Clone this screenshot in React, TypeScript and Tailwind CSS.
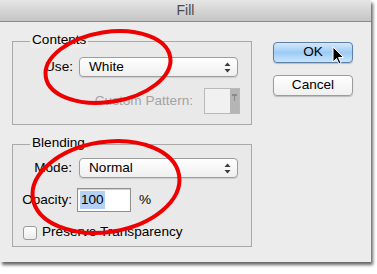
import React from "react";

const font = { fontFamily: '"Liberation Sans", Arial, sans-serif' };

function SelectBox({ value, width }: { value: string; width: number }) {
  return (
    <div
      className="relative flex h-[20px] items-center rounded-[4px] border border-[#9d9d9d] bg-gradient-to-b from-[#ffffff] to-[#efefef] pl-[9px] text-[13.6px] text-black shadow-[0_1px_1px_rgba(0,0,0,0.12)]"
      style={{ width }}
    >
      {value}
      <svg className="absolute right-[6px] top-[4px]" width="7" height="11" viewBox="0 0 7 11">
        <path d="M3.5 0.5 L6.5 4 L0.5 4 Z" fill="#3a3a3a" />
        <path d="M3.5 10.5 L6.5 7 L0.5 7 Z" fill="#3a3a3a" />
      </svg>
    </div>
  );
}

export default function App() {
  return (
    <div className="relative h-[274px] w-[377px] overflow-hidden bg-white" style={font}>
      <div className="flex h-[262px] w-[371px] flex-col bg-[#ececec] shadow-[2px_3px_3px_rgba(0,0,0,0.6)]">
        {/* title bar */}
        <div className="flex h-[22px] shrink-0 items-center justify-center border-b border-[#8a8a8a] bg-gradient-to-b from-[#e6e6e6] to-[#c4c4c4] text-[14px] text-[#4a4a4a]">
          Fill
        </div>
        <div className="flex flex-1">
          {/* left column */}
          <div className="flex w-[273px] flex-col pl-[12px] pt-[19px]">
            {/* Contents */}
            <div className="relative h-[84px] w-[240px] border border-[#a9a9a9] bg-[#e9e9e9]">
              <span className="absolute left-[17px] top-[-10px] bg-[#ececec] px-[2px] text-[13.6px] leading-[16px] text-black">
                Contents
              </span>
              <div className="mt-[15px] flex items-center">
                <span className="w-[60px] text-right text-[13.6px] text-black">Use:</span>
                <div className="ml-[6px]">
                  <SelectBox value="White" width={159} />
                </div>
              </div>
              <div className="mt-[11px] flex items-center justify-end pr-[11px]">
                <span className="mr-[11px] text-[13.6px] text-[#a3a3a3]">Custom Pattern:</span>
                <div className="flex h-[26px] w-[36px] border border-[#b9b9b9] bg-[#f1f1f1]">
                  <div className="flex-1" />
                  <div className="flex w-[9px] items-start justify-center bg-[#b5b5b5] pt-[5px]">
                    <svg width="5" height="9" viewBox="0 0 5 9">
                      <path d="M0 0 H5 V2 H3 V7 H2 V2 H0 Z" fill="#8a8a8a" />
                    </svg>
                  </div>
                </div>
              </div>
            </div>
            {/* Blending */}
            <div className="relative mt-[19px] h-[103px] w-[240px] border border-[#a9a9a9] bg-[#e9e9e9]">
              <span className="absolute left-[17px] top-[-10px] bg-[#ececec] px-[2px] text-[13.6px] leading-[16px] text-black">
                Blending
              </span>
              <div className="mt-[13px] flex items-center">
                <span className="w-[59px] text-right text-[13.6px] text-black">Mode:</span>
                <div className="ml-[7px]">
                  <SelectBox value="Normal" width={159} />
                </div>
              </div>
              <div className="mt-[10px] flex items-center">
                <span className="w-[59px] text-right text-[13.6px] text-black">Opacity:</span>
                <div className="ml-[5px] flex h-[24px] w-[54px] items-center border border-[#8f8f8f] bg-white pl-[2px] shadow-[inset_0_1px_1px_rgba(0,0,0,0.2)]">
                  <span className="bg-[#b4d1f3] px-[1px] text-[13.6px] leading-[18px] text-black">100</span>
                </div>
                <span className="ml-[8px] text-[13.6px] text-black">%</span>
              </div>
              <div className="mt-[10px] flex items-center pl-[10px]">
                <div className="h-[14px] w-[14px] rounded-[3px] border border-[#9a9a9a] bg-gradient-to-b from-[#ffffff] to-[#ececec]" />
                <span className="ml-[5px] text-[13.6px] text-black">Preserve Transparency</span>
              </div>
            </div>
          </div>
          {/* right column */}
          <div className="flex flex-col pt-[20px]">
            <button className="flex h-[21px] w-[80px] items-center justify-center rounded-[4px] border border-[#5c7fa8] bg-gradient-to-b from-[#d5e8fb] via-[#9ccbf5] to-[#c9e5fd] text-[13.6px] text-black shadow-[0_1px_1px_rgba(0,0,0,0.2)]">
              OK
            </button>
            <button className="mt-[12px] flex h-[21px] w-[80px] items-center justify-center rounded-[4px] border border-[#9c9c9c] bg-gradient-to-b from-[#ffffff] to-[#f0f0f0] text-[13.6px] text-black shadow-[0_1px_1px_rgba(0,0,0,0.2)]">
              Cancel
            </button>
          </div>
        </div>
      </div>
      {/* annotations */}
      <svg className="pointer-events-none absolute left-0 top-0" width="377" height="274" viewBox="0 0 377 274">
        <ellipse cx="108" cy="67" rx="63" ry="35" transform="rotate(-9 108 67)" fill="none" stroke="#ee0000" strokeWidth="4" />
        <ellipse cx="106" cy="187" rx="74" ry="45" transform="rotate(-9 106 187)" fill="none" stroke="#ee0000" strokeWidth="4" />
        <path
          d="M333 47 L333 62 L336.5 58.5 L339 64 L341 63 L338.5 57.5 L343.5 57.5 Z"
          fill="#000"
          stroke="#fff"
          strokeWidth="1"
          strokeLinejoin="round"
        />
      </svg>
    </div>
  );
}
